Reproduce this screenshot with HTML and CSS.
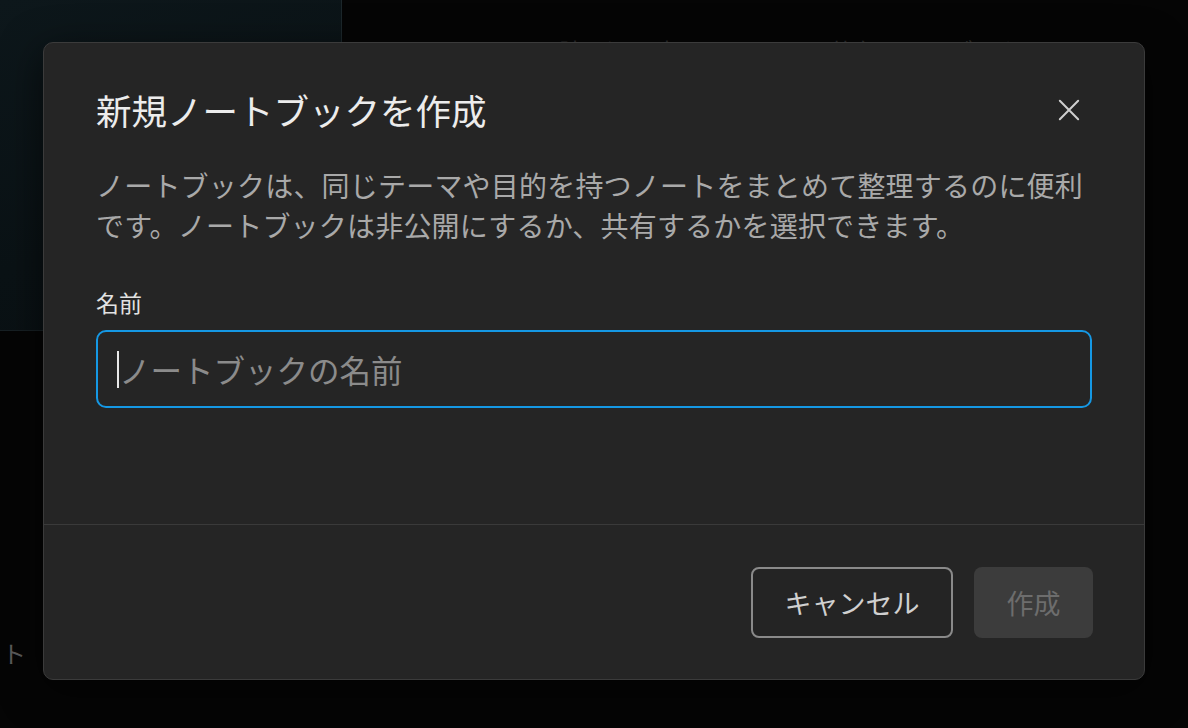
FILE: index.html
```html
<!DOCTYPE html>
<html lang="ja">
<head>
  <meta charset="UTF-8">
  <title>新規ノートブックを作成</title>
  <link rel="stylesheet" href="styles.css">
</head>
<body>

<div class="app">
  <aside class="sidebar">
    <div class="sidebar-top"></div>
    <div class="sidebar-nav">
      <span class="nav-item">ト</span>
    </div>
  </aside>
  <main class="main">
    <div class="topbar">
      <span class="tab">読み込み中</span>
      <span class="tab">共有ノートブック</span>
    </div>
  </main>
</div>

<!-- Modal -->
<div class="modal">
  <div class="modal-body">
    <div class="modal-header">
      <h2 class="modal-title">新規ノートブックを作成</h2>
      <button class="close-btn" aria-label="閉じる">
        <svg width="24" height="24" viewBox="0 0 24 24">
          <path d="M2 2 L22 22 M22 2 L2 22" stroke="#cfcfcf" stroke-width="2.2" stroke-linecap="round" fill="none"/>
        </svg>
      </button>
    </div>
    <p class="modal-desc">ノートブックは、同じテーマや目的を持つノートをまとめて整理するのに便利です。ノートブックは非公開にするか、共有するかを選択できます。</p>
    <label class="field-label">名前</label>
    <div class="field">
      <span class="caret"></span>
      <span class="placeholder">ノートブックの名前</span>
    </div>
  </div>
  <div class="modal-footer">
    <button class="btn btn-outline">キャンセル</button>
    <button class="btn btn-disabled">作成</button>
  </div>
</div>

</body>
</html>
```

FILE: styles.css
```css
body {
  margin: 0;
  background: #050505;
  font-family: "Noto Sans CJK JP", "Noto Sans", sans-serif;
  height: 728px;
  overflow: hidden;
}

.app {
  display: flex;
  height: 728px;
}

.sidebar {
  width: 342px;
  display: flex;
  flex-direction: column;
}

.sidebar-top {
  height: 330px;
  background: linear-gradient(160deg, #0d171b 0%, #0a1215 60%, #091013 100%);
  border-right: 1px solid #1c272b;
  border-bottom: 1px solid #172024;
}

.sidebar-nav {
  padding-top: 304px;
  padding-left: 2px;
}

.nav-item {
  font-size: 24px;
  color: #5a5a5a;
}

.main {
  flex: 1;
}

.topbar {
  display: flex;
  gap: 150px;
  padding: 33px 0 0 217px;
}

.tab {
  font-size: 24px;
  color: #2e2e2e;
}

/* Modal */
.modal {
  position: absolute;
  left: 43px;
  top: 42px;
  width: 1100px;
  height: 636px;
  background: #252525;
  border: 1px solid #3b3b3b;
  border-radius: 10px;
  display: flex;
  flex-direction: column;
  box-shadow: 0 10px 40px rgba(0,0,0,0.6);
}

.modal-body {
  height: 482px;
  box-sizing: border-box;
  padding: 43px 52px 0 52px;
  border-bottom: 1px solid #3a3a3a;
}

.modal-header {
  display: flex;
  align-items: center;
  justify-content: space-between;
}

.modal-title {
  margin: 0;
  font-size: 35.5px;
  font-weight: 400;
  line-height: 48px;
  color: #ececec;
}

.close-btn {
  width: 44px;
  height: 44px;
  background: none;
  border: none;
  padding: 0;
  display: flex;
  align-items: center;
  justify-content: center;
  margin-right: 1px;
}

.close-btn svg {
  width: 22px;
  height: 22px;
}

.modal-desc {
  margin: 31px 0 0 0;
  font-size: 28px;
  letter-spacing: 0.2px;
  line-height: 40px;
  color: #a9a9a9;
}

.field-label {
  display: block;
  margin-top: 41px;
  font-size: 23px;
  line-height: 32px;
  color: #e2e2e2;
}

.field {
  margin-top: 12px;
  height: 78px;
  box-sizing: border-box;
  border: 2px solid #1598e4;
  border-radius: 10px;
  display: flex;
  align-items: center;
  padding-left: 19px;
}

.caret {
  width: 2px;
  height: 37px;
  background: #e8e8e8;
}

.placeholder {
  font-size: 31.5px;
  color: #8b8b8b;
}

.modal-footer {
  flex: 1;
  display: flex;
  align-items: center;
  justify-content: flex-end;
  gap: 21px;
  padding-right: 51px;
}

.btn {
  height: 71px;
  border-radius: 8px;
  font-family: "Noto Sans CJK JP", "Noto Sans", sans-serif;
  font-size: 27px;
  box-sizing: border-box;
}

.btn-outline {
  width: 202px;
  background: #242424;
  border: 2px solid #8a8a8a;
  color: #d0d0d0;
}

.btn-disabled {
  width: 119px;
  background: #3c3c3c;
  border: none;
  color: #6d6d6d;
}
```
